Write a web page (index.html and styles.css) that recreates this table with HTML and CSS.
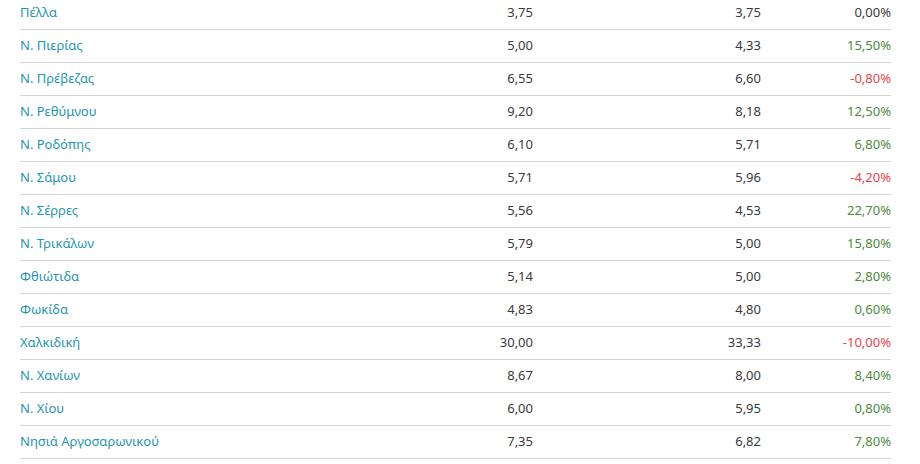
FILE: index.html
```html
<!DOCTYPE html>
<html lang="el">
<head>
<meta charset="utf-8">
<link rel="stylesheet" href="styles.css">
</head>
<body>
<div class="table">
  <div class="row"><span class="name">Πέλλα</span><span class="num">3,75</span><span class="num">3,75</span><span class="num">0,00%</span></div>
  <div class="row"><span class="name">Ν. Πιερίας</span><span class="num">5,00</span><span class="num">4,33</span><span class="num pos">15,50%</span></div>
  <div class="row"><span class="name">Ν. Πρέβεζας</span><span class="num">6,55</span><span class="num">6,60</span><span class="num neg">-0,80%</span></div>
  <div class="row"><span class="name">Ν. Ρεθύμνου</span><span class="num">9,20</span><span class="num">8,18</span><span class="num pos">12,50%</span></div>
  <div class="row"><span class="name">Ν. Ροδόπης</span><span class="num">6,10</span><span class="num">5,71</span><span class="num pos">6,80%</span></div>
  <div class="row"><span class="name">Ν. Σάμου</span><span class="num">5,71</span><span class="num">5,96</span><span class="num neg">-4,20%</span></div>
  <div class="row"><span class="name">Ν. Σέρρες</span><span class="num">5,56</span><span class="num">4,53</span><span class="num pos">22,70%</span></div>
  <div class="row"><span class="name">Ν. Τρικάλων</span><span class="num">5,79</span><span class="num">5,00</span><span class="num pos">15,80%</span></div>
  <div class="row"><span class="name">Φθιώτιδα</span><span class="num">5,14</span><span class="num">5,00</span><span class="num pos">2,80%</span></div>
  <div class="row"><span class="name">Φωκίδα</span><span class="num">4,83</span><span class="num">4,80</span><span class="num pos">0,60%</span></div>
  <div class="row"><span class="name">Χαλκιδική</span><span class="num">30,00</span><span class="num">33,33</span><span class="num neg">-10,00%</span></div>
  <div class="row"><span class="name">Ν. Χανίων</span><span class="num">8,67</span><span class="num">8,00</span><span class="num pos">8,40%</span></div>
  <div class="row"><span class="name">Ν. Χίου</span><span class="num">6,00</span><span class="num">5,95</span><span class="num pos">0,80%</span></div>
  <div class="row"><span class="name">Νησιά Αργοσαρωνικού</span><span class="num">7,35</span><span class="num">6,82</span><span class="num pos">7,80%</span></div>
</div>
</body>
</html>
```

FILE: styles.css
```css
html, body {
  margin: 0;
  padding: 0;
  background: #ffffff;
  overflow: hidden;
}
body {
  font-family: "Noto Sans", "Open Sans", sans-serif;
  font-size: 13px;
  color: #3a3a3a;
}
.table {
  margin: -3px 0 0 20px;
  width: 871px;
}
.row {
  box-sizing: border-box;
  display: grid;
  grid-template-columns: 380px 133px 228px 130px;
  height: 33px;
  padding-bottom: 2px;
  align-items: center;
  border-bottom: 1px solid #d4d4d4;
}
.name {
  color: #1d96b0;
}
.num {
  text-align: right;
}
.pos {
  color: #4c8a3e;
}
.neg {
  color: #e6454d;
}
```
